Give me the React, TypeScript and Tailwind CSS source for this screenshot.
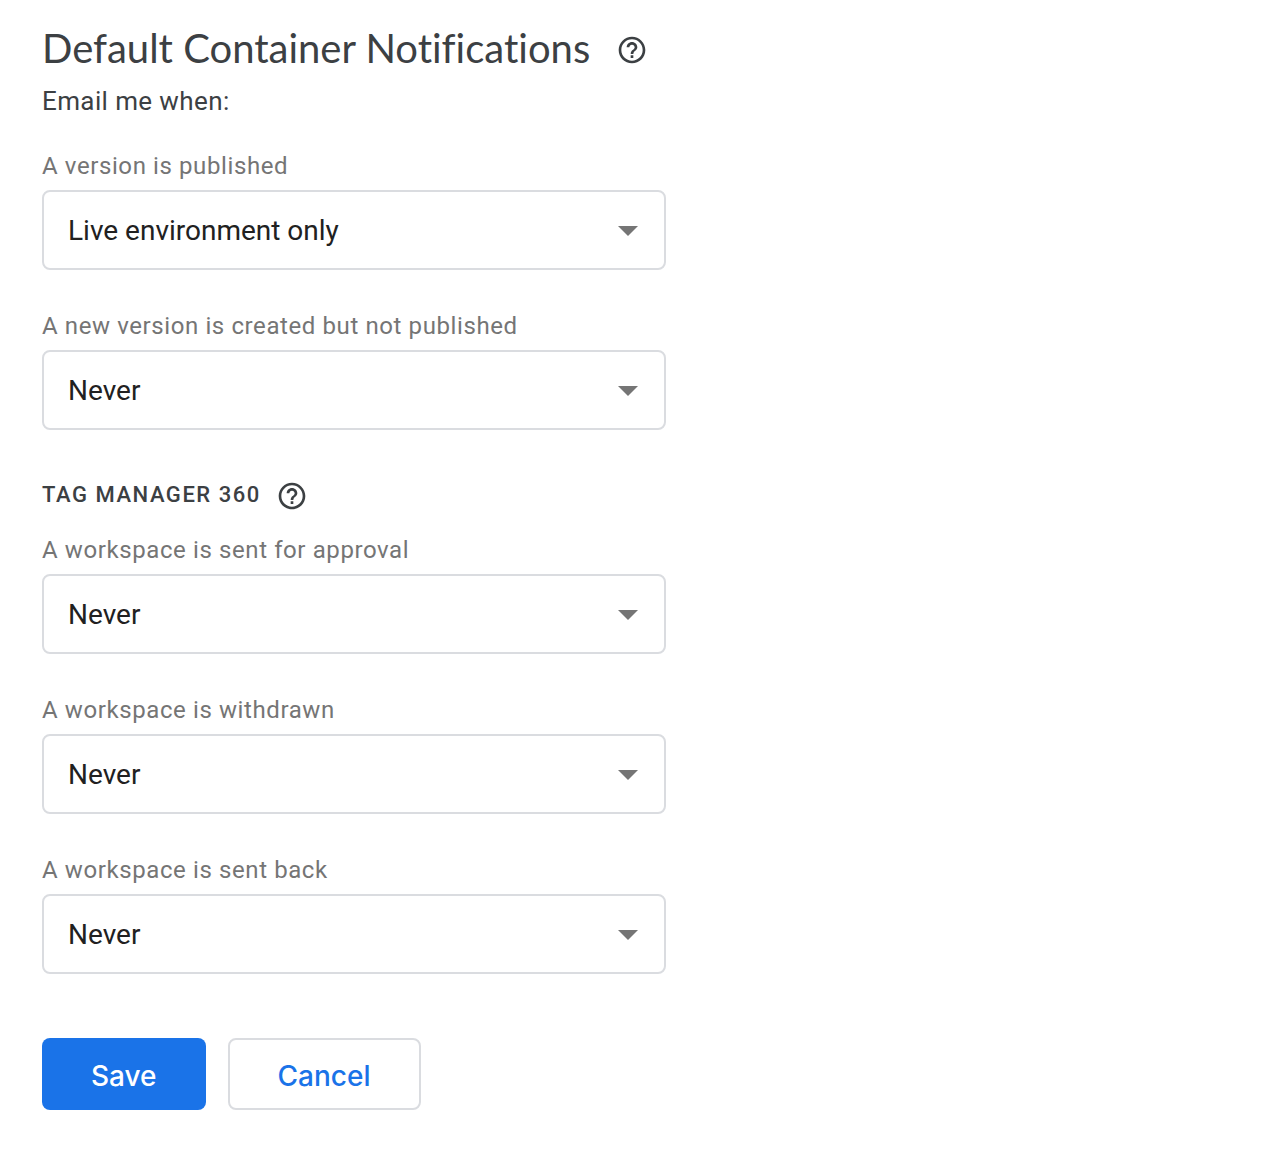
import { useId } from "react";

function HelpIcon() {
  return (
    <svg viewBox="0 0 24 24" className="size-8" fill="currentColor" aria-hidden="true">
      <path d="M11 18h2v-2h-2v2zm1-16C6.480 2 2 6.480 2 12s4.480 10 10 10 10-4.480 10-10S17.520 2 12 2zm0 18c-4.410 0-8-3.590-8-8s3.590-8 8-8 8 3.590 8 8-3.590 8-8 8zm0-14c-2.210 0-4 1.790-4 4h2c0-1.100.9-2 2-2s2 .9 2 2c0 2-3 1.750-3 5h2c0-2.250 3-2.500 3-5 0-2.210-1.790-4-4-4z" />
    </svg>
  );
}

function HelpButton({ label }: { label: string }) {
  return (
    <button type="button" aria-label={label} className="shrink-0 text-[#3c4043]">
      <HelpIcon />
    </button>
  );
}

const options = ["Never", "Live environment only", "Always"];

function SelectField({ label, value }: { label: string; value: string }) {
  const id = useId();
  return (
    <div className="flex flex-col">
      <label htmlFor={id} className="h-10 text-2xl/8 tracking-wide text-[#757575]">
        {label}
      </label>
      <div className="relative">
        <select
          id={id}
          defaultValue={value}
          className="h-20 w-full appearance-none rounded-lg border-2 border-[#dadce0] bg-white pt-0.5 pr-16 pl-6 text-[28px] text-[#212121]"
        >
          {options.map((o) => (
            <option key={o}>{o}</option>
          ))}
        </select>
        <svg
          viewBox="0 0 20 10"
          className="pointer-events-none absolute top-9 right-7 h-2.5 w-5 fill-[#757575]"
          aria-hidden="true"
        >
          <path d="M0 0h20L10 10z" />
        </svg>
      </div>
    </div>
  );
}

export default function App() {
  return (
    <main className="min-h-screen bg-white px-[42px] pt-6 pb-11 font-['Roboto',sans-serif] text-[#3c4043]">
      <form className="max-w-[624px]" onSubmit={(e) => e.preventDefault()}>
        <div className="flex items-center gap-[26px]">
          <h1 className="pb-1 font-['Lato',sans-serif] text-[40px]/[48px] [font-variant-ligatures:none]">
            Default Container Notifications
          </h1>
          <HelpButton label="Help about default container notifications" />
        </div>
        <p className="mt-2 text-[26px]/[34px] tracking-[0.015em]">Email me when:</p>

        <div className="mt-8 flex flex-col gap-10">
          <SelectField label="A version is published" value="Live environment only" />
          <SelectField label="A new version is created but not published" value="Never" />
        </div>

        <div className="mt-[50px] flex items-center gap-[15px]">
          <h2 className="pb-0.5 text-[22px]/[30px] font-medium tracking-[0.07em] uppercase">Tag Manager 360</h2>
          <HelpButton label="Help about Tag Manager 360" />
        </div>

        <div className="mt-[22px] flex flex-col gap-10">
          <SelectField label="A workspace is sent for approval" value="Never" />
          <SelectField label="A workspace is withdrawn" value="Never" />
          <SelectField label="A workspace is sent back" value="Never" />
        </div>

        <div className="mt-16 flex gap-[22px] font-['Inter',sans-serif] text-[28px] font-medium">
          <button type="submit" className="h-[72px] rounded-lg bg-[#1a73e8] px-[49px] pt-1 text-white">
            Save
          </button>
          <button type="button" className="h-[72px] rounded-lg border-2 border-[#dadce0] px-12 pt-1 text-[#1a73e8]">
            Cancel
          </button>
        </div>
      </form>
    </main>
  );
}
